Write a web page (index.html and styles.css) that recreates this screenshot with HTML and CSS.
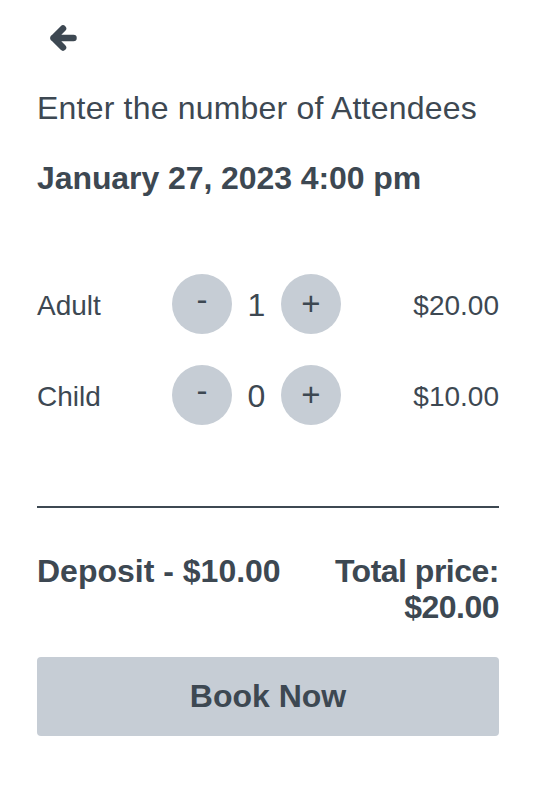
FILE: index.html
```html
<!DOCTYPE html>
<html lang="en">
<head>
<meta charset="utf-8">
<title>Attendees</title>
<link rel="stylesheet" href="styles.css">
</head>
<body>
<div class="page">
  <button class="back" aria-label="Back">
    <svg width="28" height="28" viewBox="0 0 28 28"><path d="M4.5 14 L14 4.5 M4.5 14 L14 23.5 M4.5 14 H24.5" fill="none" stroke="#3d4852" stroke-width="6.5" stroke-linecap="round" stroke-linejoin="round"/></svg>
  </button>
  <h1 class="title">Enter the number of Attendees</h1>
  <h2 class="date">January 27, 2023 4:00 pm</h2>
  <div class="rows">
    <div class="row">
      <span class="label">Adult</span>
      <div class="stepper">
        <button class="step minus">-</button>
        <span class="count">1</span>
        <button class="step">+</button>
      </div>
      <span class="price">$20.00</span>
    </div>
    <div class="row">
      <span class="label">Child</span>
      <div class="stepper">
        <button class="step minus">-</button>
        <span class="count">0</span>
        <button class="step">+</button>
      </div>
      <span class="price">$10.00</span>
    </div>
  </div>
  <hr class="divider">
  <div class="totals">
    <span class="deposit">Deposit - $10.00</span>
    <span class="total">Total price:<br>$20.00</span>
  </div>
  <button class="book">Book Now</button>
</div>
</body>
</html>
```
FILE: styles.css
```css
html, body {
  margin: 0;
  background: #ffffff;
}
body {
  font-family: "Liberation Sans", Arial, Helvetica, sans-serif;
  color: #3d4852;
}
.page {
  padding: 24px 49px 0 37px;
}
.back {
  display: block;
  margin: 0 0 0 12px;
  padding: 0;
  width: 28px;
  height: 28px;
  border: 0;
  background: none;
}
.back svg {
  display: block;
}
.title {
  margin: 38px 0 0;
  font-size: 32px;
  font-weight: normal;
  line-height: 1.15;
  letter-spacing: 0.2px;
}
.date {
  margin: 33px 0 0;
  font-size: 32px;
  font-weight: bold;
  line-height: 1.15;
  letter-spacing: -0.08px;
}
.rows {
  margin-top: 77px;
  display: flex;
  flex-direction: column;
  gap: 31px;
}
.row {
  display: flex;
  align-items: center;
  height: 60px;
}
.label {
  width: 135px;
  font-size: 28px;
  line-height: 1.15;
  padding-top: 4px;
}
.stepper {
  display: flex;
  align-items: center;
}
.step {
  width: 60px;
  height: 60px;
  border-radius: 50%;
  border: 0;
  background: #c6cdd5;
  color: #3d4852;
  font-family: "Liberation Sans", Arial, sans-serif;
  font-size: 33px;
  line-height: 1;
  padding: 0;
  display: flex;
  align-items: center;
  justify-content: center;
}
.step.minus {
  padding-bottom: 8px;
}
.count {
  width: 49px;
  text-align: center;
  font-size: 32px;
  line-height: 1.15;
  padding-top: 4px;
}
.price {
  margin-left: auto;
  font-size: 28px;
  line-height: 1.15;
  padding-top: 4px;
}
.divider {
  margin: 81px 0 0;
  border: 0;
  height: 2px;
  background: #3d4852;
}
.totals {
  margin-top: 45px;
  display: flex;
  justify-content: space-between;
  align-items: flex-start;
  font-size: 32px;
  font-weight: bold;
  line-height: 1.15;
}
.total {
  text-align: right;
  letter-spacing: -0.5px;
}
.book {
  display: block;
  margin-top: 31px;
  width: 100%;
  height: 79px;
  border: 0;
  border-radius: 4px;
  background: #c6cdd5;
  color: #3d4852;
  font-family: "Liberation Sans", Arial, sans-serif;
  font-size: 32px;
  font-weight: bold;
}
```
